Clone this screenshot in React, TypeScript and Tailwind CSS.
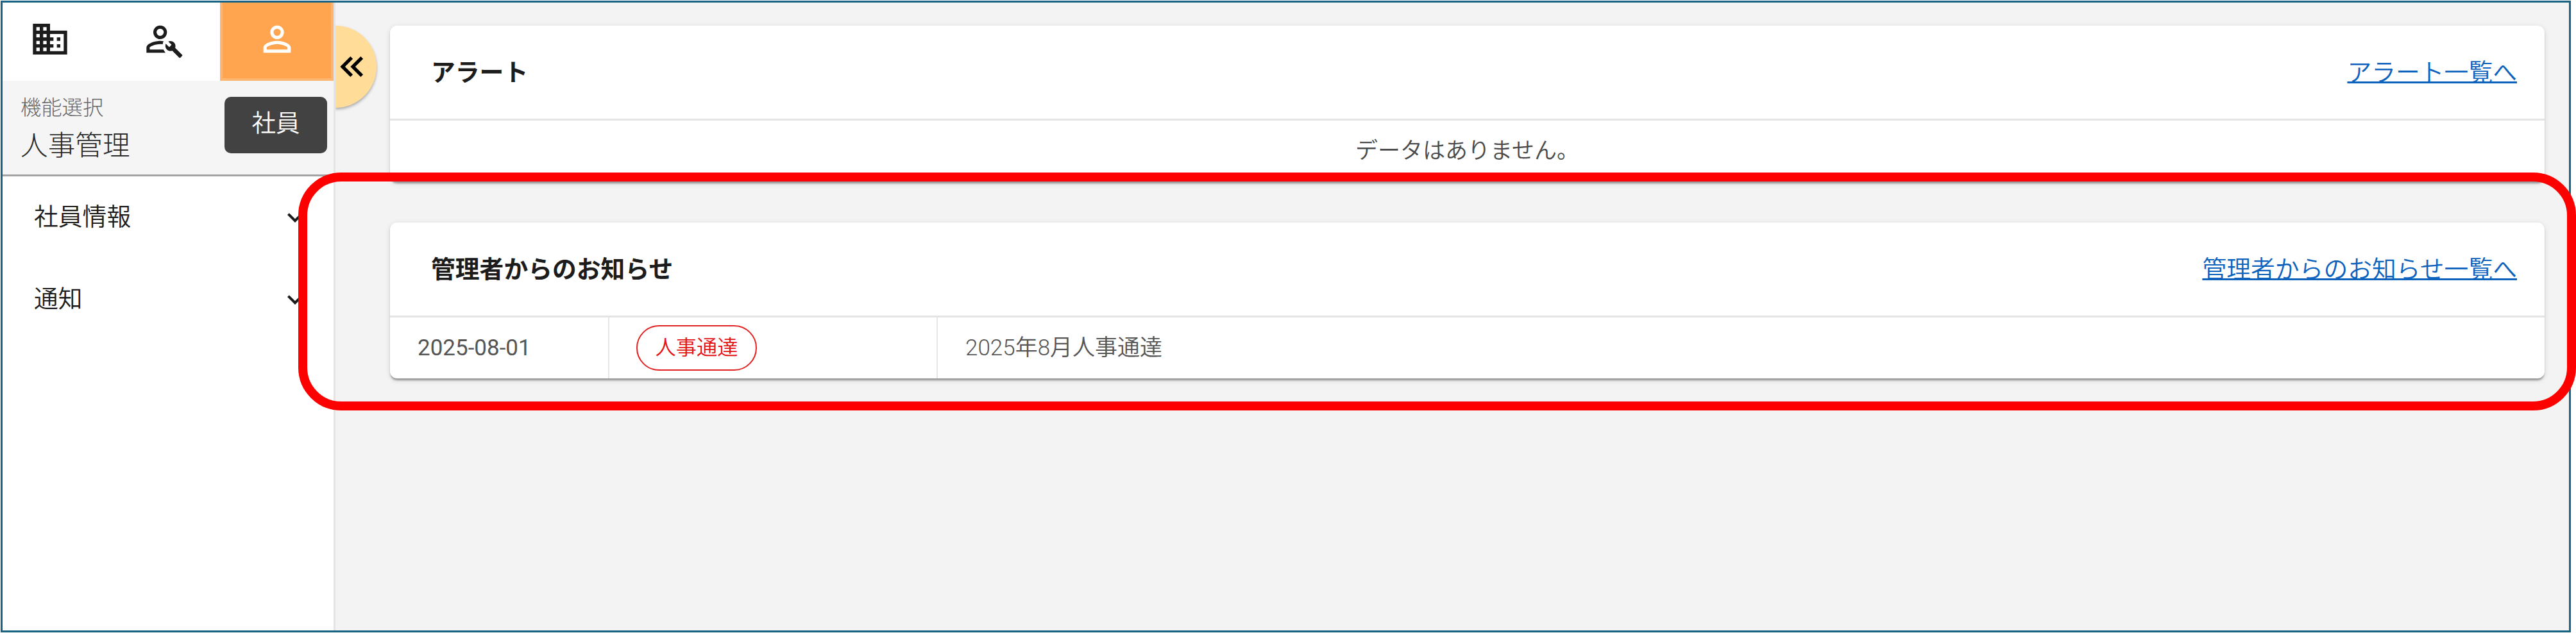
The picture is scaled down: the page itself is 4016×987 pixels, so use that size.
import type { ReactNode } from "react";

const icons = {
  domain:
    "M18,15H16V17H18M18,11H16V13H18M20,19H12V17H14V15H12V13H14V11H12V9H20M10,7H8V5H10M10,11H8V9H10M10,15H8V13H10M10,19H8V17H10M6,7H4V5H6M6,11H4V9H6M6,15H4V13H6M6,19H4V17H6M12,7V3H2V21H22V7H12Z",
  accountWrench:
    "M10,4A4,4 0 0,1 14,8A4,4 0 0,1 10,12A4,4 0 0,1 6,8A4,4 0 0,1 10,4M10,5.9A2.1,2.1 0 0,0 7.9,8A2.1,2.1 0 0,0 10,10.1A2.1,2.1 0 0,0 12.1,8A2.1,2.1 0 0,0 10,5.9M10,13C10.6,13 11.3,13.07 12,13.2C11.7,13.8 11.5,14.4 11.5,15C11,14.93 10.5,14.9 10,14.9C7.03,14.9 3.9,16.36 3.9,17V18.1H11.9L13.1,20H2V17C2,14.34 7.33,13 10,13M22.87,21.19L18.76,17.08C19.17,16.04 18.94,14.82 18.08,13.97C17.18,13.06 15.83,12.88 14.74,13.38L16.68,15.32L15.33,16.68L13.34,14.73C12.8,15.82 13.05,17.17 13.93,18.08C14.79,18.94 16.01,19.16 17.05,18.76L21.16,22.86C21.34,23.05 21.61,23.05 21.79,22.86L22.83,21.83C23.05,21.65 23.05,21.33 22.87,21.19Z",
  account:
    "M12,4A4,4 0 0,1 16,8A4,4 0 0,1 12,12A4,4 0 0,1 8,8A4,4 0 0,1 12,4M12,5.9A2.1,2.1 0 0,0 9.9,8A2.1,2.1 0 0,0 12,10.1A2.1,2.1 0 0,0 14.1,8A2.1,2.1 0 0,0 12,5.9M12,13C14.67,13 20,14.33 20,17V20H4V17C4,14.33 9.33,13 12,13M12,14.9C9.03,14.9 5.9,16.36 5.9,17V18.1H18.1V17C18.1,16.36 14.97,14.9 12,14.9Z",
  chevronDown: "M7.41,8.58L12,13.17L16.59,8.58L18,10L12,16L6,10L7.41,8.58Z",
  chevronDoubleLeft:
    "M18.41,7.41L17,6L11,12L17,18L18.41,16.59L13.83,12L18.41,7.41M12.41,7.41L11,6L5,12L11,18L12.41,16.59L7.83,12L12.41,7.41Z",
};

const menuItems = ["社員情報", "通知"];

const notices = [
  { date: "2025-08-01", category: "人事通達", title: "2025年8月人事通達" },
];

function Icon({
  name,
  className,
}: {
  name: keyof typeof icons;
  className: string;
}) {
  return (
    <svg viewBox="0 0 24 24" fill="currentColor" className={className}>
      <path d={icons[name]} />
    </svg>
  );
}

function Sidebar() {
  return (
    <aside className="flex w-[519px] shrink-0 flex-col border-r-3 border-[#e4e4e4] bg-white">
      {/* Role tabs */}
      <div className="flex h-[122px] text-[#1c1c1c]">
        <button
          type="button"
          className="flex w-[148px] items-center justify-center pb-2"
        >
          <Icon name="domain" className="size-16" />
        </button>
        <button
          type="button"
          className="flex w-[191px] items-center justify-center pb-2 pl-[15px]"
        >
          <Icon name="accountWrench" className="size-16" />
        </button>
        <button
          type="button"
          className="flex w-[177px] items-center justify-center border-4 border-t-0 border-[#ffb572] bg-[#ffa54f] pb-1 text-white"
        >
          <Icon name="account" className="size-16" />
        </button>
      </div>

      {/* Current function */}
      <div className="flex h-[149px] justify-between border-b-3 border-[#a3a3a3] bg-[#f5f5f5] pt-[25px] pr-[10px] pl-7">
        <div>
          <p className="text-[32.3px] leading-[34px] font-light text-[#666666]">
            機能選択
          </p>
          <p className="mt-[15px] text-[42.67px] leading-[54px] font-light text-[#2b2b2b]">
            人事管理
          </p>
        </div>
        <button
          type="button"
          className="h-22 w-40 rounded-[10px] bg-[#424242] pb-1 text-[37.6px] leading-none font-[350] text-white"
        >
          社員
        </button>
      </div>

      {/* Menu */}
      <nav>
        {menuItems.map((item) => (
          <div
            key={item}
            className="flex h-32 items-center justify-between pr-9 pl-[49px] text-[#1c1c1c]"
          >
            <span className="text-[37.8px] leading-none font-[350]">
              {item}
            </span>
            <Icon name="chevronDown" className="size-12" />
          </div>
        ))}
      </nav>
    </aside>
  );
}

function Card({
  title,
  link,
  children,
}: {
  title: string;
  link: string;
  children: ReactNode;
}) {
  return (
    <section className="h-[243px] rounded-[11px] bg-white shadow-[0_5.33px_2.67px_-2.67px_rgba(0,0,0,0.2),0_2.67px_2.67px_0_rgba(0,0,0,0.14),0_2.67px_8px_0_rgba(0,0,0,0.12)]">
      <div className="flex h-[148px] items-center justify-between border-b-3 border-[#e4e4e4] pr-[43px] pl-16 text-[37.8px] leading-[56px]">
        <h2 className="font-bold text-[#1c1c1c]">{title}</h2>
        <a
          href="#"
          className="font-[350] text-[#0d62bd] underline decoration-3 underline-offset-[1px] [text-decoration-skip-ink:none]"
        >
          {link}
        </a>
      </div>
      {children}
    </section>
  );
}

export default function App() {
  return (
    <div
      lang="ja"
      className="relative h-[987px] w-[4016px] overflow-hidden bg-white pt-px pl-px font-[Roboto,'Noto_Sans_CJK_JP',sans-serif]"
    >
      <div className="flex h-[985px] w-[4007px] border-3 border-[#1b6385] bg-[#f3f3f3]">
        <Sidebar />

        <main className="relative flex flex-1 flex-col gap-16 pt-9 pr-[38px] pl-[85px]">
          {/* Sidebar toggle */}
          <button
            type="button"
            className="absolute top-9 left-0 flex h-32 w-16 items-center rounded-r-full bg-[#ffdd99] text-black shadow-[0_2.67px_4px_rgba(0,0,0,0.3)] [clip-path:inset(-10px_-10px_-10px_0)]"
          >
            <Icon
              name="chevronDoubleLeft"
              className="-ml-[6px] size-16 shrink-0"
            />
          </button>

          <Card title="アラート" link="アラート一覧へ">
            <p className="flex h-[95px] items-center justify-center text-[35px] leading-none font-[350] text-[#4a4a4a]">
              データはありません。
            </p>
          </Card>

          <Card title="管理者からのお知らせ" link="管理者からのお知らせ一覧へ">
            {notices.map((notice) => (
              <div
                key={notice.date}
                className="flex h-[95px] text-[35px] leading-none text-[#555555]"
              >
                <div className="flex w-[342px] items-center border-r-2 border-[#e6e6e6] pl-[43px]">
                  {notice.date}
                </div>
                <div className="flex w-[512px] items-center border-r-2 border-[#e6e6e6] pl-[42px]">
                  <span className="flex h-[71px] w-[188px] items-center justify-center rounded-full border-[2.67px] border-[#e32020] text-[32.3px] font-[350] text-[#e31414]">
                    {notice.category}
                  </span>
                </div>
                <div className="flex items-center pl-[43px] font-[350]">
                  {notice.title}
                </div>
              </div>
            ))}
          </Card>
        </main>
      </div>

      {/* Highlight around the notices */}
      <div className="pointer-events-none absolute top-[269px] left-[465px] h-[371px] w-[3551px] rounded-[67px] border-14 border-[#ff0000]" />
    </div>
  );
}
